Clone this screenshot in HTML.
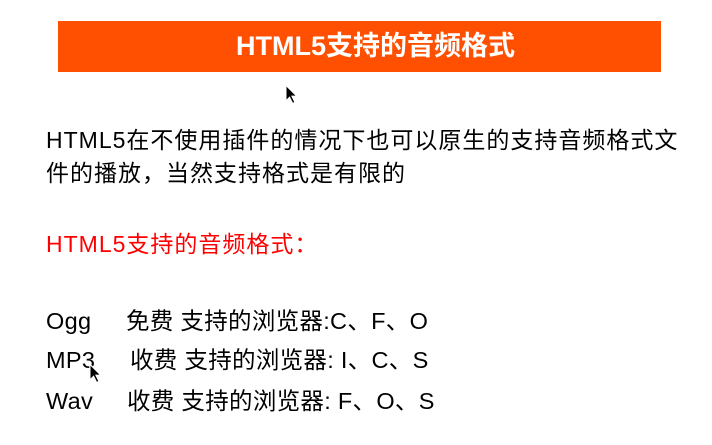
<!DOCTYPE html>
<html><head><meta charset="utf-8"><style>
body{margin:0;width:712px;height:445px;background:#fff;position:relative;overflow:hidden;font-family:"Liberation Sans","Noto Sans CJK SC",sans-serif;}
.bar{position:absolute;left:58px;top:21px;width:603px;height:51px;background:#fe5000;}
.title{position:absolute;left:0;width:100%;top:0;height:51px;line-height:51px;text-align:center;color:#fff;font-weight:bold;font-size:27px;padding-left:32px;box-sizing:border-box}
.t{position:absolute;font-size:23px;white-space:nowrap;color:#000;line-height:1}
.b{font-size:23.5px;letter-spacing:0.3px}
</style></head><body>
<div class="bar"><div class="title">HTML5支持的音频格式</div></div>
<div class="t" style="left:46px;top:129px;letter-spacing:1px">HTML5在不使用插件的情况下也可以原生的支持音频格式文</div>
<div class="t" style="left:46px;top:162px;letter-spacing:1px">件的播放，当然支持格式是有限的</div>
<div class="t" style="left:46px;top:233px;color:#f00;letter-spacing:1px">HTML5支持的音频格式：</div>
<div class="t b" style="left:46px;top:310px">Ogg</div><div class="t b" style="left:126px;top:310px">免费 支持的浏览器:C、F、O</div>
<div class="t b" style="left:46px;top:349px">MP3</div><div class="t b" style="left:130px;top:349px">收费 支持的浏览器: I、C、S</div>
<div class="t b" style="left:46px;top:390px">Wav</div><div class="t b" style="left:127px;top:390px">收费 支持的浏览器: F、O、S</div>
<svg style="position:absolute;left:284px;top:84px" width="16" height="22" viewBox="0 0 12 18"><path d="M1 1 L1 14 L4 11 L6.5 16 L8.5 15 L6 10 L10 10 Z" fill="#000" stroke="#fff" stroke-width="1"/></svg>
<svg style="position:absolute;left:88px;top:363px" width="16" height="22" viewBox="0 0 12 18"><path d="M1 1 L1 14 L4 11 L6.5 16 L8.5 15 L6 10 L10 10 Z" fill="#000" stroke="#fff" stroke-width="1"/></svg>
</body></html>
